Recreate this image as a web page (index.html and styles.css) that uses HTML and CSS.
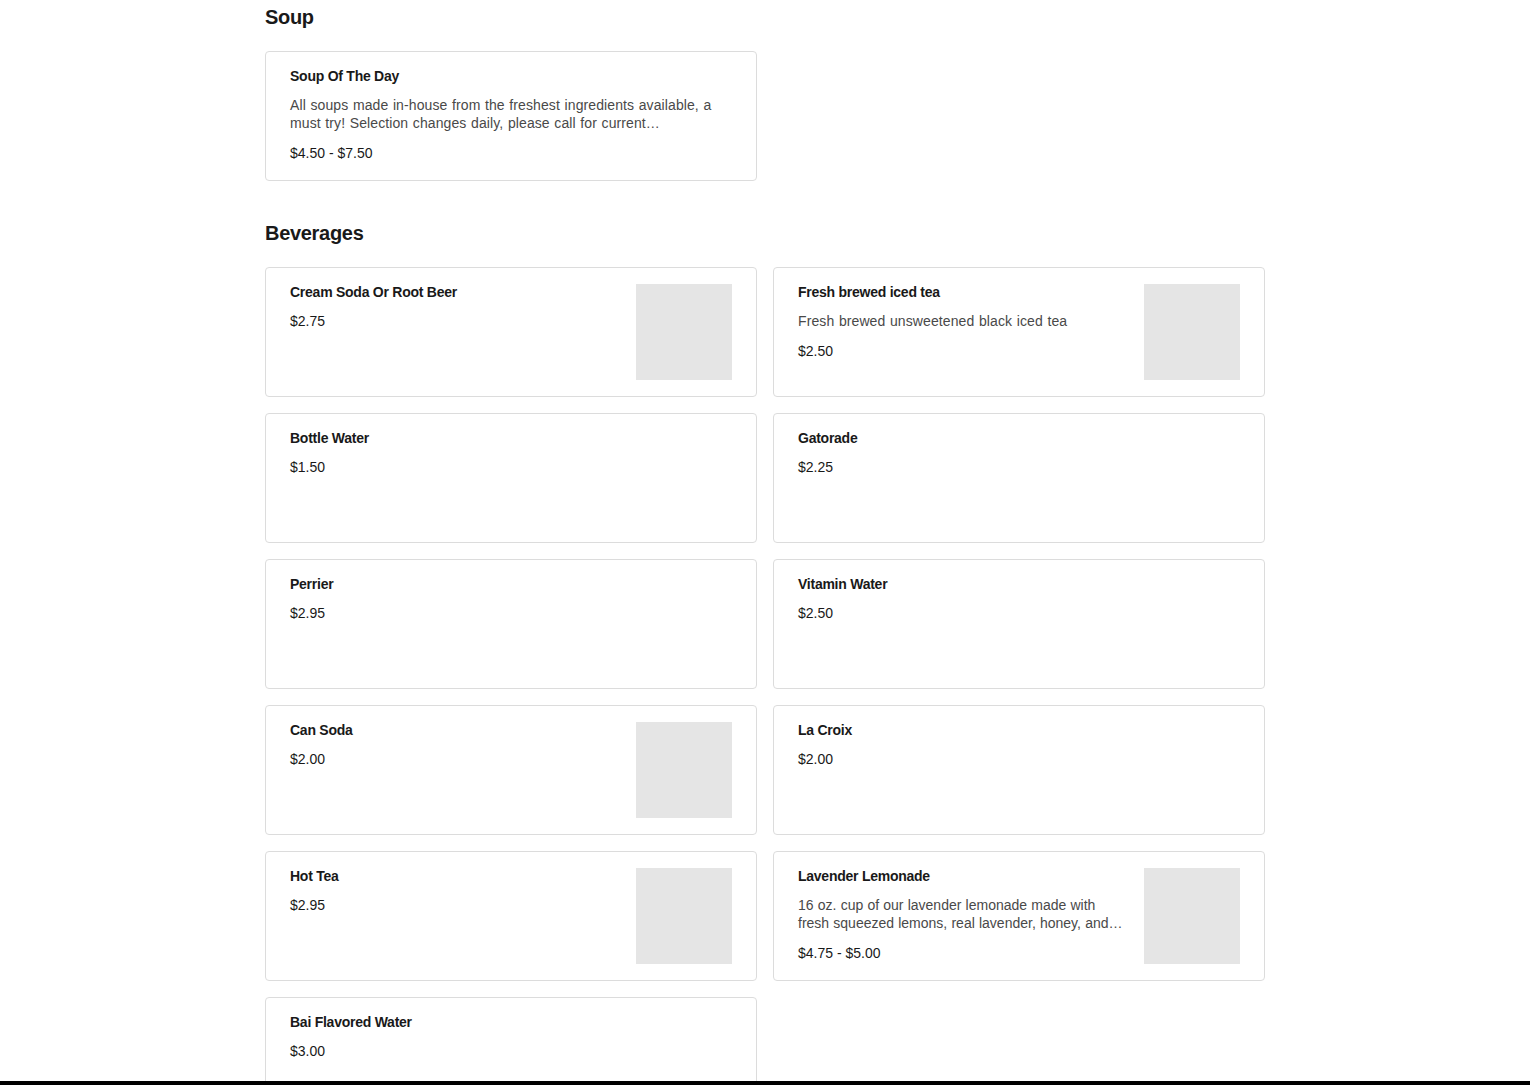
FILE: index.html
```html
<!DOCTYPE html>
<html>
<head>
<meta charset="utf-8">
<link rel="stylesheet" href="styles.css">
</head>
<body>
<main class="menu">
  <section class="section">
    <h2 class="section-title">Soup</h2>
    <div class="grid">
      <div class="card">
        <div class="info">
          <div class="name">Soup Of The Day</div>
          <div class="desc">All soups made in-house from the freshest ingredients available, a must try! Selection changes daily, please call for current…</div>
          <div class="price">$4.50 - $7.50</div>
        </div>
      </div>
    </div>
  </section>
  <section class="section">
    <h2 class="section-title">Beverages</h2>
    <div class="grid">
      <div class="card">
        <div class="info">
          <div class="name">Cream Soda Or Root Beer</div>
          <div class="price">$2.75</div>
        </div>
        <div class="thumb"></div>
      </div>
      <div class="card">
        <div class="info">
          <div class="name">Fresh brewed iced tea</div>
          <div class="desc">Fresh brewed unsweetened black iced tea</div>
          <div class="price">$2.50</div>
        </div>
        <div class="thumb"></div>
      </div>
      <div class="card">
        <div class="info">
          <div class="name">Bottle Water</div>
          <div class="price">$1.50</div>
        </div>
      </div>
      <div class="card">
        <div class="info">
          <div class="name">Gatorade</div>
          <div class="price">$2.25</div>
        </div>
      </div>
      <div class="card">
        <div class="info">
          <div class="name">Perrier</div>
          <div class="price">$2.95</div>
        </div>
      </div>
      <div class="card">
        <div class="info">
          <div class="name">Vitamin Water</div>
          <div class="price">$2.50</div>
        </div>
      </div>
      <div class="card">
        <div class="info">
          <div class="name">Can Soda</div>
          <div class="price">$2.00</div>
        </div>
        <div class="thumb"></div>
      </div>
      <div class="card">
        <div class="info">
          <div class="name">La Croix</div>
          <div class="price">$2.00</div>
        </div>
      </div>
      <div class="card">
        <div class="info">
          <div class="name">Hot Tea</div>
          <div class="price">$2.95</div>
        </div>
        <div class="thumb"></div>
      </div>
      <div class="card">
        <div class="info">
          <div class="name">Lavender Lemonade</div>
          <div class="desc desc-tight">16 oz. cup of our lavender lemonade made with<br>fresh squeezed lemons, real lavender, honey, and…</div>
          <div class="price">$4.75 - $5.00</div>
        </div>
        <div class="thumb"></div>
      </div>
      <div class="card">
        <div class="info">
          <div class="name">Bai Flavored Water</div>
          <div class="price">$3.00</div>
        </div>
      </div>
    </div>
  </section>
</main>
<div class="bottom-bar"></div>
</body>
</html>
```

FILE: styles.css
```css
* { box-sizing: border-box; }
html, body { margin: 0; padding: 0; background: #fff; }
body {
  font-family: "Liberation Sans", Arial, sans-serif;
  color: #191919;
}
.menu {
  width: 1000px;
  margin: 0 auto;
  padding-top: 5px;
}
.section + .section { margin-top: 40px; }
.section-title {
  margin: 0 0 22px 0;
  font-size: 20px;
  line-height: 24px;
  font-weight: 700;
  letter-spacing: -0.3px;
  color: #191919;
}
.grid {
  display: grid;
  grid-template-columns: 492px 492px;
  gap: 16px;
}
.card {
  display: flex;
  justify-content: space-between;
  align-items: flex-start;
  height: 130px;
  padding: 16px 24px 16px 24px;
  border: 1px solid #dcdcdc;
  border-radius: 4px;
  background: #fff;
}
.info {
  display: flex;
  flex-direction: column;
  gap: 12px;
  min-width: 0;
  flex: 1;
}
.name {
  font-size: 14px;
  line-height: 16px;
  font-weight: 700;
  letter-spacing: -0.25px;
  color: #191919;
}
.desc {
  font-size: 14px;
  line-height: 18px;
  letter-spacing: 0.1px;
  word-spacing: 0.6px;
  color: #494949;
}
.desc-tight {
  letter-spacing: 0;
  word-spacing: 0.3px;
}
.price {
  font-size: 14px;
  line-height: 18px;
  color: #191919;
}
.thumb {
  width: 96px;
  height: 96px;
  flex: none;
  margin-left: 16px;
  background: #e5e5e5;
}
.bottom-bar {
  position: fixed;
  left: 0;
  right: 0;
  bottom: 0;
  height: 4px;
  background: #000;
}
```
